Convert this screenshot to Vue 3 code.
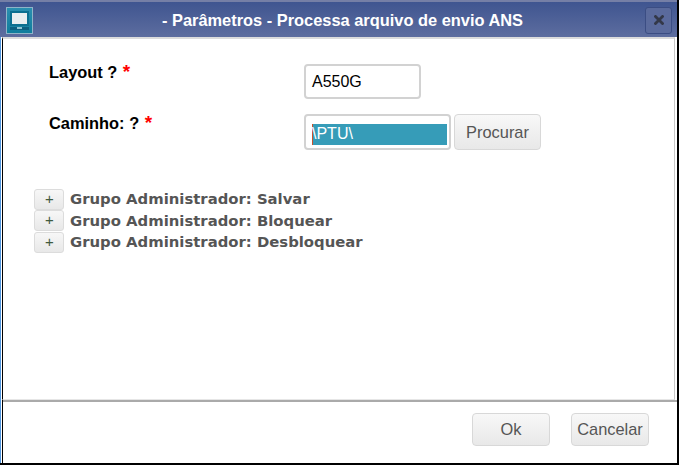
<script setup>
const groups = ['Salvar', 'Bloquear', 'Desbloquear']
</script>

<template>
  <div class="dialog">
    <header class="titlebar">
      <span class="logo">
        <svg width="27" height="27" viewBox="0 0 27 27">
          <defs>
            <linearGradient id="lg" x1="0" y1="0" x2="0" y2="1">
              <stop offset="0" stop-color="#2b8fb0" />
              <stop offset="1" stop-color="#0f7d9c" />
            </linearGradient>
          </defs>
          <rect x="0.5" y="0.5" width="26" height="26" fill="url(#lg)" stroke="#8fb4c8" />
          <rect x="4" y="4" width="19" height="15" fill="#0b6f90" />
          <rect x="6" y="6" width="15" height="11" fill="#e8eef0" />
          <path d="M4 20h19v3H4z" fill="#0b5f80" />
          <rect x="11" y="20" width="5" height="2" fill="#8fc4d4" />
        </svg>
      </span>
      <h1 class="title">- Parâmetros - Processa arquivo de envio ANS</h1>
      <span class="close">
        <svg width="10" height="10" viewBox="0 0 10 10">
          <path d="M1.5 1.5l7 7M8.5 1.5l-7 7" stroke="#333848" stroke-width="2.8" stroke-linecap="square" />
        </svg>
      </span>
    </header>

    <div class="body">
      <main class="content">
        <div class="form">
          <label class="label">Layout ? <em>*</em></label>
          <div class="field"><div class="input short">A550G</div></div>
          <label class="label second">Caminho: ? <em>*</em></label>
          <div class="field">
            <div class="input long"><span class="selection">\PTU\</span></div>
            <button class="btn browse">Procurar</button>
          </div>
        </div>

        <ul class="tree">
          <li v-for="g in groups" :key="g" class="node">
            <button class="plus">+</button>
            <span class="node-text">Grupo Administrador: {{ g }}</span>
          </li>
        </ul>
      </main>

      <footer class="footer">
        <button class="btn action">Ok</button>
        <button class="btn action">Cancelar</button>
      </footer>
    </div>
  </div>
</template>

<style>
html, body { margin: 0; background: #fff; }
</style>

<style scoped>
.dialog {
  box-sizing: border-box;
  width: 679px;
  height: 465px;
  display: flex;
  flex-direction: column;
  background: #fff;
  border-right: 2px solid #000;
  border-bottom: 2px solid #000;
  font-family: "Liberation Sans", Arial, sans-serif;
}
.titlebar {
  flex: none;
  box-sizing: border-box;
  height: 37px;
  display: flex;
  align-items: center;
  padding: 1px 5px 0 6px;
  background: linear-gradient(#3f5590, #5d6d9f);
  border-top: 2px solid #757fa6;
}
.logo { flex: none; display: flex; width: 27px; height: 27px; }
.title {
  flex: 1;
  margin: 0;
  padding-left: 7px;
  text-align: center;
  color: #fff;
  font-size: 16.4px;
  font-weight: bold;
}
.close {
  flex: none;
  box-sizing: border-box;
  width: 27px;
  height: 27px;
  display: flex;
  align-items: center;
  justify-content: center;
  border: 1px solid #3b4d83;
  border-radius: 3px;
  background: #5a6a9c;
}
.body {
  flex: 1;
  min-height: 0;
  display: flex;
  flex-direction: column;
  border-left: 1px solid #4f94dc;
}
.content {
  flex: none;
  box-sizing: border-box;
  height: 363px;
  margin-right: 2px;
  margin-left: 1px;
  border-top: 2px solid #dcdcdc;
  border-right: 1px solid #c8c8c8;
  border-bottom: 1px solid #e6e6e6;
  border-left: 1px solid #000;
  padding: 25px 0 0 31px;
}
.form {
  display: grid;
  grid-template-columns: 255px auto;
  grid-template-rows: 35px 36px;
  row-gap: 15px;
  padding-left: 15px;
}
.label {
  font-size: 16.4px;
  font-weight: bold;
  color: #000;
  line-height: 17px;
}
.second { padding-top: 1px; }
.label em { color: #f00; font-style: normal; margin-left: 1px; font-size: 19px; line-height: 15px; }
.field { display: flex; gap: 3px; }
.input {
  box-sizing: border-box;
  height: 100%;
  background: #fff;
  border: 2px solid #d2d2d2;
  border-radius: 4px;
  font-size: 16px;
  color: #000;
}
.short { width: 117px; line-height: 31px; padding-left: 6px; }
.long { width: 147px; padding: 8px 2px 0 6px; }
.selection {
  display: block;
  height: 21px;
  line-height: 20px;
  background: #369cb8;
  color: #fff;
  border-left: 1px solid #c8532e;
  text-indent: -1px;
}
.btn {
  box-sizing: border-box;
  border: 1px solid #d8d8d8;
  border-radius: 4px;
  background: linear-gradient(#f8f8f8, #e8e8e8);
  color: #555;
  font-family: "Liberation Sans", Arial, sans-serif;
  font-size: 16.4px;
  padding: 0;
}
.browse { width: 87px; height: 36px; }
.tree { list-style: none; margin: 38.6px 0 0; padding: 0; }
.node { display: flex; align-items: center; height: 21.5px; }
.plus {
  box-sizing: border-box;
  width: 30px;
  height: 21px;
  padding: 0 0 3px 1px;
  border: 1px solid #dcdcdc;
  border-radius: 3px;
  background: linear-gradient(#f7f7f7, #e8e8e8);
  color: #3f5a3f;
  font-family: "Liberation Sans", sans-serif;
  font-size: 15px;
}
.node-text {
  margin-left: 6px;
  color: #555;
  font-family: "DejaVu Sans", Verdana, sans-serif;
  font-size: 14.85px;
  font-weight: bold;
}
.footer {
  flex: 1;
  display: flex;
  justify-content: flex-end;
  align-items: flex-start;
  gap: 21px;
  padding: 11px 28px 0 0;
  margin-left: 1px;
  border-left: 1px solid #000;
  background: linear-gradient(#aaa, #aaa) top / 100% 2px no-repeat;
}
.action { width: 78px; height: 33px; margin-top: 2px; }
</style>
